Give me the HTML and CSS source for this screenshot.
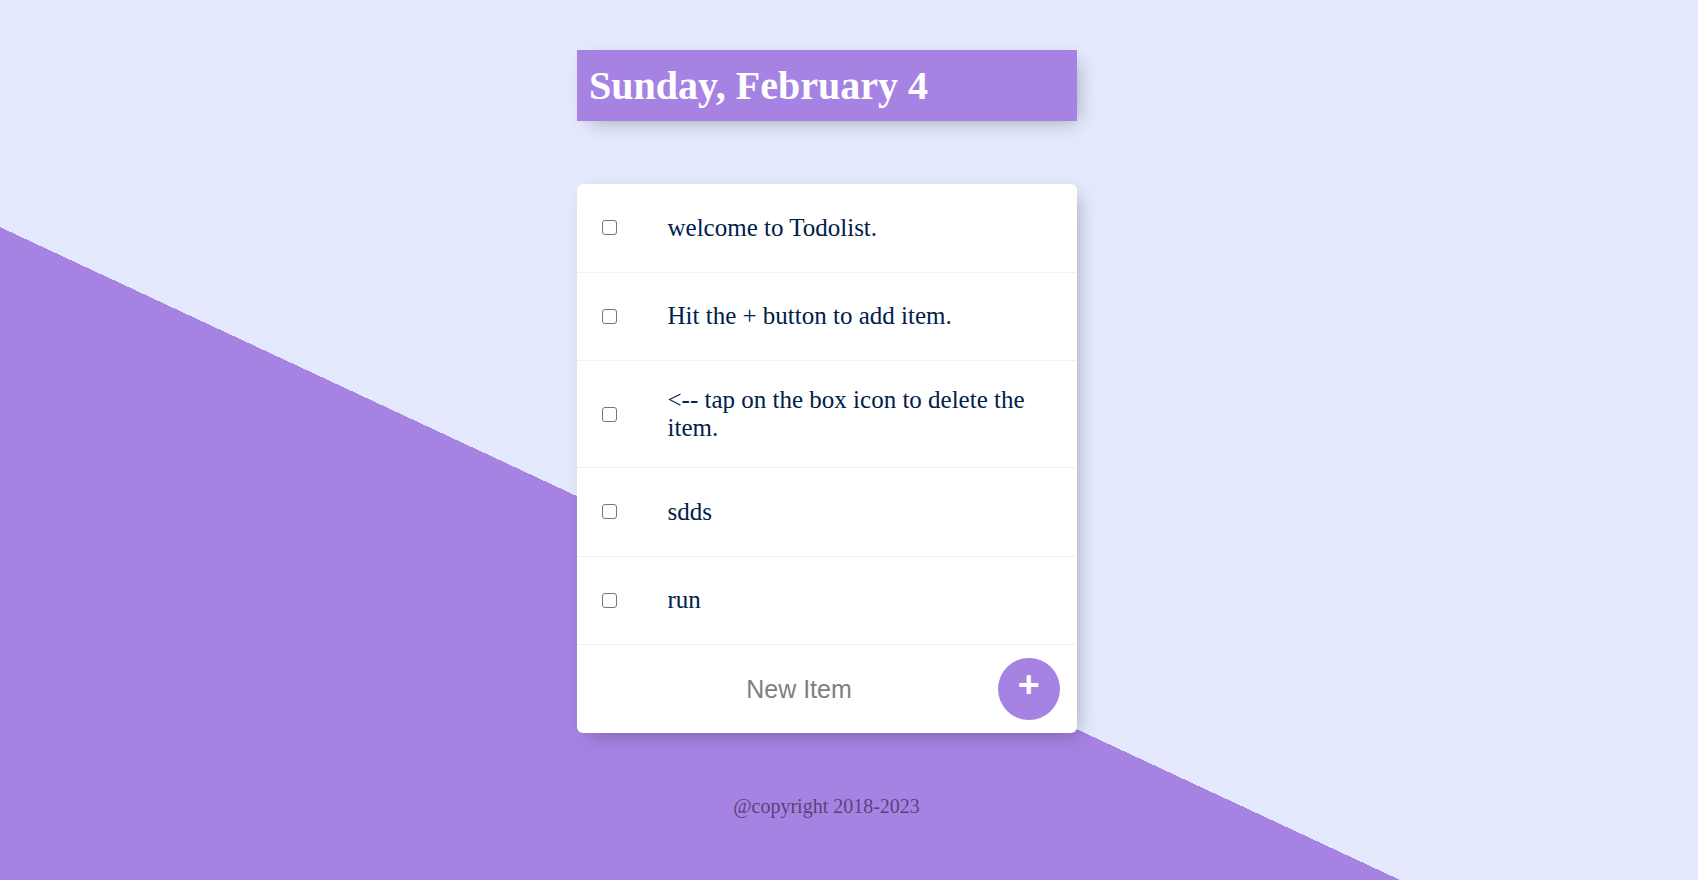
FILE: index.html
```html
<!DOCTYPE html>
<html lang="en">
<head>
<meta charset="utf-8">
<title>To-Do List</title>
<link rel="stylesheet" href="styles.css">
</head>
<body>
<div class="page">
  <div class="box heading">
    <h1>Sunday, February 4</h1>
  </div>

  <div class="box card">
    <div class="item">
      <input type="checkbox" class="check">
      <p>welcome to Todolist.</p>
    </div>
    <div class="item">
      <input type="checkbox" class="check">
      <p>Hit the + button to add item.</p>
    </div>
    <div class="item">
      <input type="checkbox" class="check">
      <p>&lt;-- tap on the box icon to delete the item.</p>
    </div>
    <div class="item">
      <input type="checkbox" class="check">
      <p>sdds</p>
    </div>
    <div class="item">
      <input type="checkbox" class="check">
      <p>run</p>
    </div>
    <form class="item new-item">
      <input type="text" class="new-input" placeholder="New Item" autocomplete="off">
      <button type="button" class="add-btn">+</button>
    </form>
  </div>

  <footer class="footer">@copyright 2018-2023</footer>
</div>
</body>
</html>
```

FILE: styles.css
```css
html {
  background-color: #E4E9FD;
  background-image: linear-gradient(25deg, #A683E3 50%, #E4E9FD 50%);
  background-size: 100% 1246px;
  background-repeat: no-repeat;
}

body {
  margin: 0;
  font-family: "Liberation Serif", "Times New Roman", serif;
}

.page {
  padding: 50px 45px 0 0;
}

.box {
  width: 500px;
  margin: 0 auto;
  border-radius: 6px;
  box-shadow: 6px 6px 19px -6px rgba(0, 0, 0, 0.3);
}

.heading {
  background-color: #A683E3;
  border-radius: 0;
}

.heading h1 {
  margin: 0;
  padding: 12.5px;
  font-size: 40px;
  line-height: 46px;
  font-weight: bold;
  color: #fff;
}

.card {
  margin-top: 63px;
  background: #fff;
}

.item {
  min-height: 87.5px;
  display: flex;
  align-items: center;
  border-bottom: 1px solid #F1F1F1;
  box-sizing: content-box;
}

.item:last-child {
  border-bottom: 0;
}

.check {
  appearance: none;
  -webkit-appearance: none;
  flex: none;
  width: 15px;
  height: 15px;
  margin: 0 26px 0 25px;
  border: 1.25px solid #767676;
  border-radius: 3px;
  background: #fff;
  box-sizing: border-box;
}

.item p {
  flex: 1;
  margin: 0;
  padding: 25px;
  font-size: 25px;
  line-height: 28px;
  color: #00204a;
}

.new-item {
  align-items: flex-start;
  padding-left: 27px;
  gap: 3px;
}

.new-input {
  width: 391px;
  height: 75px;
  margin-top: 7px;
  padding: 0;
  border: none;
  background: transparent;
  text-align: center;
  font-family: "Liberation Sans", Arial, sans-serif;
  font-size: 25px;
  color: #333;
  outline: none;
}

.new-input::placeholder {
  color: grey;
  opacity: 1;
}

.add-btn {
  width: 62.5px;
  height: 62.5px;
  margin-top: 12.5px;
  padding: 0 0 9px 0;
  border: 0;
  border-radius: 50%;
  background-color: #A683E3;
  color: #fff;
  font-family: "Liberation Sans", Arial, sans-serif;
  font-size: 37.5px;
  font-weight: bold;
  line-height: 1;
}

.footer {
  margin-top: 62.5px;
  text-align: center;
  font-size: 20px;
  color: rgba(0, 0, 0, 0.5);
}
```
